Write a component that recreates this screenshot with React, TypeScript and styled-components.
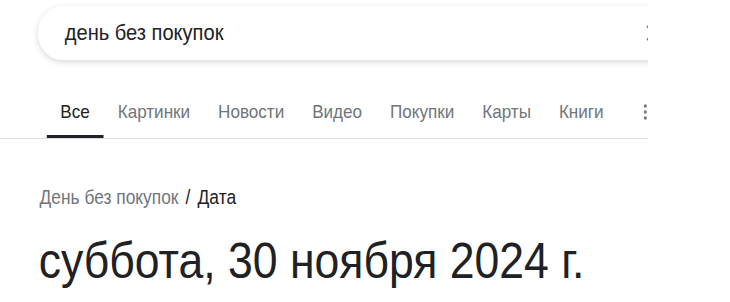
import React from "react";
import styled, { createGlobalStyle } from "styled-components";

const Global = createGlobalStyle`
  html, body { margin: 0; padding: 0; background: #fff; }
  body { font-family: "Liberation Sans", Arial, sans-serif; }
`;

/* The captured page is 720px wide, shown squeezed to 648px. */
const Viewport = styled.div`
  width: 648px;
  overflow: hidden;
  background: #fff;
`;

const Page = styled.div`
  width: 720px;
  transform: scaleX(0.9);
  transform-origin: 0 0;
`;

const SearchArea = styled.div`
  padding: 6px 0 0 42px;
  height: 60px;
  box-sizing: border-box;
`;

const SearchBox = styled.div`
  width: 740px;
  height: 54px;
  border-radius: 27px;
  background: #fff;
  box-shadow: 0 2px 6px 1px rgba(64, 60, 67, 0.16);
  display: flex;
  align-items: center;
  padding-left: 30px;
  box-sizing: border-box;
`;

const Query = styled.span`
  font-size: 22.3px;
  color: #202124;
  flex: none;
  width: 646px;
`;

const ClearIcon = styled.svg`
  width: 16px;
  height: 16px;
  flex: none;
`;

const Tabs = styled.nav`
  display: flex;
  align-items: flex-end;
  height: 79px;
  border-bottom: 1px solid #dadce0;
  padding-left: 52px;
  box-sizing: border-box;
  gap: 1px;
`;

const Tab = styled.div<{ $active?: boolean }>`
  font-size: 19px;
  line-height: 24px;
  color: ${(p) => (p.$active ? "#202124" : "#70757a")};
  padding: 0 15px 11px;
  border-bottom: 3px solid ${(p) => (p.$active ? "#202124" : "transparent")};
  white-space: nowrap;
`;

const More = styled.div`
  margin-left: 28px;
  height: 38px;
  display: flex;
  align-items: flex-start;
  padding-top: 4px;
  box-sizing: border-box;
`;

const Breadcrumb = styled.div`
  margin: 47px 0 0 44px;
  font-size: 19.3px;
  line-height: 24px;
  color: #70757a;
  white-space: nowrap;
`;

const Sep = styled.span`
  color: #202124;
  margin: 0 8px;
`;

const Current = styled.span`
  color: #202124;
`;

const Heading = styled.h1`
  margin: 23px 0 0 43px;
  font-family: "Liberation Sans", Arial, sans-serif;
  font-weight: 400;
  font-size: 49.5px;
  line-height: 56px;
  color: #202124;
  white-space: nowrap;
`;

export default function App() {
  const tabs = ["Все", "Картинки", "Новости", "Видео", "Покупки", "Карты", "Книги"];
  return (
    <>
      <Global />
      <Viewport>
        <Page>
          <SearchArea>
            <SearchBox>
              <Query>день без покупок</Query>
              <ClearIcon viewBox="0 0 16 16">
                <path d="M1 1 15 15M15 1 1 15" stroke="#70757a" strokeWidth="2" />
              </ClearIcon>
            </SearchBox>
          </SearchArea>
          <Tabs>
            {tabs.map((t, i) => (
              <Tab key={t} $active={i === 0}>
                {t}
              </Tab>
            ))}
            <More>
              <svg width="4" height="16" viewBox="0 0 4 16">
                <circle cx="2" cy="2" r="1.7" fill="#70757a" />
                <circle cx="2" cy="8" r="1.7" fill="#70757a" />
                <circle cx="2" cy="14" r="1.7" fill="#70757a" />
              </svg>
            </More>
          </Tabs>
          <Breadcrumb>
            День без покупок<Sep>/</Sep>
            <Current>Дата</Current>
          </Breadcrumb>
          <Heading>суббота, 30 ноября 2024 г.</Heading>
        </Page>
      </Viewport>
    </>
  );
}
